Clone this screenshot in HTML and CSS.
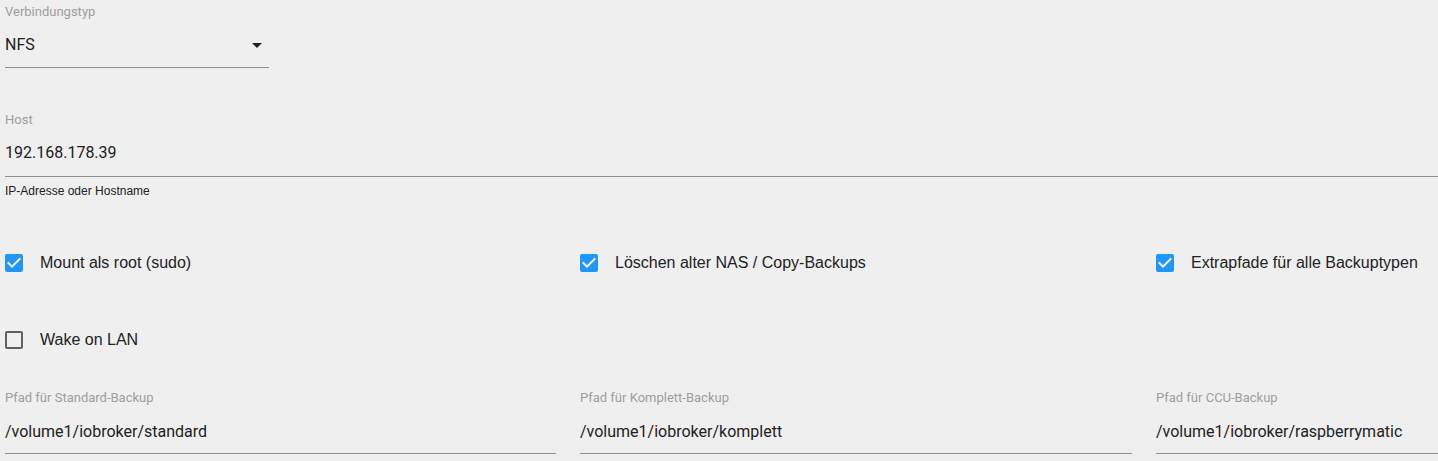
FILE: index.html
```html
<!DOCTYPE html>
<html lang="de">
<head>
    <meta charset="UTF-8">
    <meta name="viewport" content="width=device-width, initial-scale=1.0">
    <title>Backup Einstellungen</title>
    <link rel="stylesheet" href="styles.css">
</head>
<body>
    <div class="settings">
        <div class="field select-field">
            <div class="field-label">Verbindungstyp</div>
            <div class="field-input">
                <span>NFS</span>
                <svg class="arrow" viewBox="0 0 24 24" width="24" height="24"><path d="M7 10l5 5 5-5z"/></svg>
            </div>
        </div>

        <div class="field host-field">
            <div class="field-label">Host</div>
            <div class="field-input">192.168.178.39</div>
        </div>
        <div class="helper">IP-Adresse oder Hostname</div>

        <div class="grid check-row">
            <label class="check">
                <svg class="box checked" viewBox="0 0 24 24" width="24" height="24"><path d="M19 3H5c-1.11 0-2 .9-2 2v14c0 1.1.89 2 2 2h14c1.11 0 2-.9 2-2V5c0-1.1-.89-2-2-2zm-9 14l-5-5 1.41-1.41L10 14.17l7.59-7.59L19 8l-9 9z"/></svg>
                <span>Mount als root (sudo)</span>
            </label>
            <label class="check">
                <svg class="box checked" viewBox="0 0 24 24" width="24" height="24"><path d="M19 3H5c-1.11 0-2 .9-2 2v14c0 1.1.89 2 2 2h14c1.11 0 2-.9 2-2V5c0-1.1-.89-2-2-2zm-9 14l-5-5 1.41-1.41L10 14.17l7.59-7.59L19 8l-9 9z"/></svg>
                <span>Löschen alter NAS / Copy-Backups</span>
            </label>
            <label class="check">
                <svg class="box checked" viewBox="0 0 24 24" width="24" height="24"><path d="M19 3H5c-1.11 0-2 .9-2 2v14c0 1.1.89 2 2 2h14c1.11 0 2-.9 2-2V5c0-1.1-.89-2-2-2zm-9 14l-5-5 1.41-1.41L10 14.17l7.59-7.59L19 8l-9 9z"/></svg>
                <span>Extrapfade für alle Backuptypen</span>
            </label>
        </div>

        <div class="grid check-row second">
            <label class="check">
                <svg class="box" viewBox="0 0 24 24" width="24" height="24"><path d="M19 5v14H5V5h14m0-2H5c-1.1 0-2 .9-2 2v14c0 1.1.9 2 2 2h14c1.1 0 2-.9 2-2V5c0-1.1-.9-2-2-2z"/></svg>
                <span>Wake on LAN</span>
            </label>
        </div>

        <div class="grid paths">
            <div class="field">
                <div class="field-label">Pfad für Standard-Backup</div>
                <div class="field-input">/volume1/iobroker/standard</div>
            </div>
            <div class="field">
                <div class="field-label">Pfad für Komplett-Backup</div>
                <div class="field-input">/volume1/iobroker/komplett</div>
            </div>
            <div class="field">
                <div class="field-label">Pfad für CCU-Backup</div>
                <div class="field-input">/volume1/iobroker/raspberrymatic</div>
            </div>
        </div>
    </div>
</body>
</html>
```

FILE: styles.css
```css
body {
    margin: 0;
    background-color: #efefef;
    color: #212121;
    font-family: Roboto, "Liberation Sans", Arial, sans-serif;
    overflow: hidden;
}

.settings {
    padding: 5px 0 0 5px;
    width: 1720px;
}

.field-label {
    font-size: 13px;
    line-height: 14px;
    color: #9e9e9e;
}

.field-input {
    margin-top: 16px;
    padding-bottom: 13px;
    font-size: 16px;
    line-height: 19px;
    border-bottom: 1px solid #8f8f8f;
}

.select-field {
    width: 264px;
}

.select-field .field-input {
    display: flex;
    align-items: center;
    justify-content: space-between;
    height: 19px;
}

.arrow {
    display: block;
    margin: -3px 0;
    fill: #212121;
}

.host-field {
    margin-top: 45px;
    width: 1440px;
}

.host-field .field-input {
    padding-bottom: 14px;
}

.helper {
    margin-top: 7px;
    font-family: "Liberation Sans", Arial, sans-serif;
    font-size: 12px;
    line-height: 14px;
    color: #212121;
}

.grid {
    display: grid;
    grid-template-columns: 551px 552px 552px;
    column-gap: 24px;
}

.check-row {
    margin-top: 44px;
    height: 42px;
    align-items: center;
}

.check-row.second {
    margin-top: 35px;
}

.check {
    display: flex;
    align-items: center;
    gap: 14px;
    font-family: "Liberation Sans", Arial, sans-serif;
    font-size: 16px;
    color: #222;
}

.box {
    display: block;
    margin-left: -3px;
    fill: #5f5f5f;
}

.box.checked {
    fill: #2196f3;
}

.paths {
    margin-top: 30px;
}

.paths .field-input {
    margin-top: 17px;
    padding-bottom: 12px;
}
```
